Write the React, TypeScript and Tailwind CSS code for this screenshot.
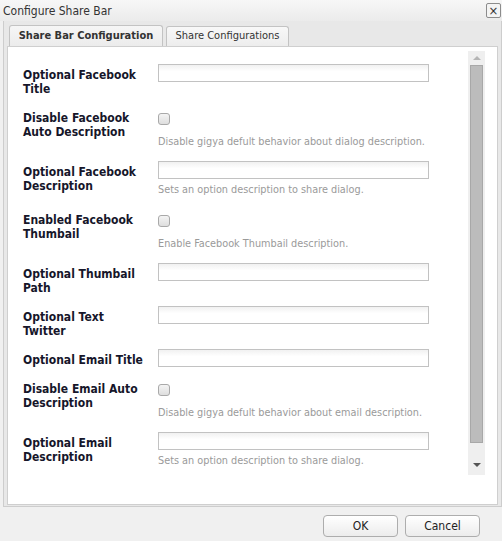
import React from "react";

type Row =
  | { kind: "input"; label: string[]; hint?: string }
  | { kind: "check"; label: string[]; hint: string };

const rows: Row[] = [
  { kind: "input", label: ["Optional Facebook", "Title"] },
  { kind: "check", label: ["Disable Facebook", "Auto Description"], hint: "Disable gigya defult behavior about dialog description." },
  { kind: "input", label: ["Optional Facebook", "Description"], hint: "Sets an option description to share dialog." },
  { kind: "check", label: ["Enabled Facebook", "Thumbail"], hint: "Enable Facebook Thumbail description." },
  { kind: "input", label: ["Optional Thumbail", "Path"] },
  { kind: "input", label: ["Optional Text", "Twitter"] },
  { kind: "input", label: ["Optional Email Title"] },
  { kind: "check", label: ["Disable Email Auto", "Description"], hint: "Disable gigya defult behavior about email description." },
  { kind: "input", label: ["Optional Email", "Description"], hint: "Sets an option description to share dialog." },
];

const font = "font-['DejaVu_Sans_Condensed','Liberation_Sans',sans-serif]";

const FormRow = ({ row }: { row: Row }) => (
  <div className={`${row.kind === "input" && !row.hint ? "mb-[11px]" : "mb-[12px]"} flex items-start`}>
    <div className="w-[135px] shrink-0 pt-[4px] text-[12px] font-bold leading-[14px] text-[#16162a]">
      {row.label.map((l) => (
        <div key={l}>{l}</div>
      ))}
    </div>
    <div className="flex flex-col">
      {row.kind === "input" ? (
        <div className="h-[18px] w-[271px] border border-[#c2c2c2] bg-gradient-to-b from-[#f1f1f1] to-white to-[40%]" />
      ) : (
        <div className="pt-[6px]">
          <div className="h-[12px] w-[12px] rounded-[3px] border border-[#a9a9a9] bg-gradient-to-b from-[#f4f4f4] to-[#dedede]" />
        </div>
      )}
      {row.hint && (
        <div className={`${row.kind === "input" ? "mt-[4px]" : "mt-[10px]"} text-[10.8px] leading-[14px] text-[#9a9a9a]`}>
          {row.hint}
        </div>
      )}
    </div>
  </div>
);

const Scrollbar = () => (
  <div className="mr-[12px] mt-[4px] flex h-[424px] w-[17px] shrink-0 flex-col items-center bg-[#efefef]">
    <div className="flex h-[14px] items-center justify-center">
      <div className="h-0 w-0 border-x-[4px] border-b-[4px] border-x-transparent border-b-[#b5b5b5]" />
    </div>
    <div className="h-[378px] w-[13px] border border-[#a8a8a8] bg-[#bcbcbc]" />
    <div className="flex flex-1 items-end justify-center pb-[8px]">
      <div className="h-0 w-0 border-x-[4px] border-t-[4px] border-x-transparent border-t-[#555]" />
    </div>
  </div>
);

const Button = ({ children }: { children: React.ReactNode }) => (
  <button className="h-[22px] w-[75px] rounded-[4px] border border-[#adadad] bg-gradient-to-b from-white to-[#ececec] text-[12px] text-[#222]">
    {children}
  </button>
);

export default function App() {
  return (
    <div className={`${font} flex h-[541px] w-[502px] flex-col bg-[#f0f0f0]`}>
      <div className="flex h-[21px] items-center justify-between bg-gradient-to-b from-[#f7f7f7] to-[#ebebeb] pl-[3px] pr-[1px]">
        <span className="text-[12px] text-[#333]">Configure Share Bar</span>
        <div className="flex h-[15px] w-[15px] items-center justify-center rounded-[2px] border border-[#8c8c8c] bg-[#f4f4f4] text-[13px] leading-none text-[#333]">
          ×
        </div>
      </div>

      <div className="ml-[3px] w-[499px] border border-t-0 border-[#cdcdcd] bg-[#e8e8e8] px-[3px] pb-[1px]">
        <div className="flex h-[25px] items-end pl-[2px]">
          <div className="flex h-[21px] w-[154px] items-center justify-center rounded-t-[3px] border border-b-0 border-[#c3c3c3] bg-gradient-to-b from-[#f6f6f6] to-[#ececec] text-[11px] font-bold text-[#333]">
            Share Bar Configuration
          </div>
          <div className="ml-[3px] flex h-[20px] w-[123px] items-center justify-center rounded-t-[3px] border border-b-0 border-[#c3c3c3] bg-gradient-to-b from-[#f8f8f8] to-[#ededed] text-[11px] text-[#333]">
            Share Configurations
          </div>
        </div>
        <div className="flex h-[459px] border border-[#cfcfcf] bg-white">
          <div className="flex-1 pl-[15px] pt-[17px]">
            {rows.map((r, i) => (
              <FormRow key={i} row={r} />
            ))}
          </div>
          <Scrollbar />
        </div>
      </div>

      <div className="flex flex-1 items-start justify-end gap-[7px] pr-[22px] pt-[8px]">
        <Button>OK</Button>
        <Button>Cancel</Button>
      </div>
    </div>
  );
}
